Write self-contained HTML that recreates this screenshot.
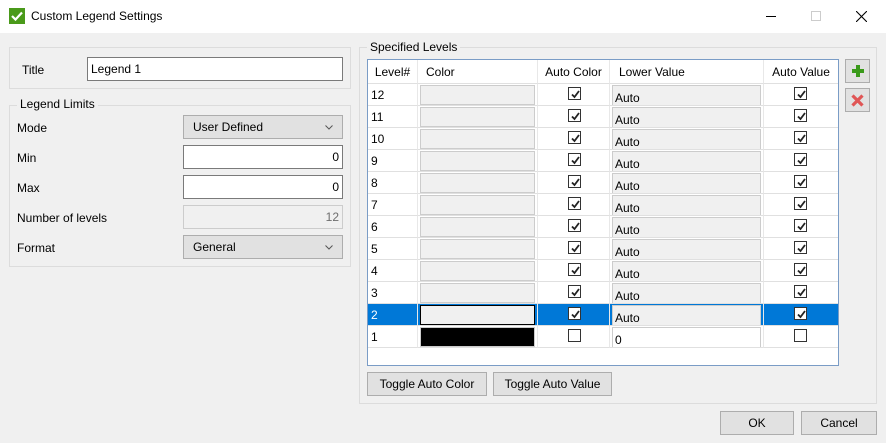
<!DOCTYPE html>
<html><head><style>
*{box-sizing:border-box;margin:0;padding:0}
body{width:886px;height:443px;background:#f0f0f0;font-family:"Liberation Sans",sans-serif;font-size:12px;color:#000;position:relative;overflow:hidden}
.a{position:absolute}
.tb{left:0;top:0;width:886px;height:33px;background:#fff}
.grp{border:1px solid #dcdcdc}
.lbl{background:#f0f0f0;padding:0 3px}
.in{background:#fff;border:1px solid #7a7a7a;height:24px;line-height:22px;padding:0 3px}
.dd{background:#e1e1e1;border:1px solid #adadad;height:24px;line-height:22px;padding-left:9px}
.dd svg{position:absolute;right:9px;top:9px}
.btn{background:#e1e1e1;border:1px solid #adadad;text-align:center;line-height:22px;height:24px}
.grid{left:367px;top:59px;width:472px;height:307px;border:1px solid #7a9cc6;background:#fff}
.hd{top:0;height:24px;line-height:24px;border-right:1px solid #e8e8e8;border-bottom:1px solid #e0e0e0}
.cell{border-right:1px solid #e8e8e8;border-bottom:1px solid #e0e0e0;height:22px}
.cb{width:13px;height:13px;border:1px solid #333;background:#fff}
.cb svg{position:absolute;left:1px;top:1px}
</style></head><body>
<div class="a tb"></div>
<div class="a" style="left:9px;top:8px;width:16px;height:16px;background:#4a9a1a"><svg width="16" height="16"><path d="M3 8 L6.5 11.5 L13 4.5" stroke="#fff" stroke-width="2.2" fill="none"/></svg></div>
<div class="a" style="left:31px;top:9px;font-size:12px">Custom Legend Settings</div>
<div class="a" style="left:766px;top:16px;width:10px;height:1px;background:#000"></div>
<div class="a" style="left:811px;top:11px;width:10px;height:10px;border:1px solid #ccc"></div>
<svg class="a" style="left:856px;top:11px" width="11" height="11"><path d="M0 0L11 11M11 0L0 11" stroke="#000" stroke-width="1.1"/></svg>

<div class="a grp" style="left:9px;top:47px;width:342px;height:42px"></div>
<div class="a" style="left:22px;top:63px">Title</div>
<div class="a in" style="left:87px;top:57px;width:256px">Legend 1</div>

<div class="a grp" style="left:9px;top:105px;width:342px;height:162px"></div>
<div class="a lbl" style="left:17px;top:97px">Legend Limits</div>
<div class="a" style="left:17px;top:121px">Mode</div>
<div class="a dd" style="left:183px;top:115px;width:160px">User Defined<svg width="8" height="5"><path d="M0.5 0.5L4 4L7.5 0.5" stroke="#555" fill="none"/></svg></div>
<div class="a" style="left:17px;top:151px">Min</div>
<div class="a in" style="left:183px;top:145px;width:160px;text-align:right">0</div>
<div class="a" style="left:17px;top:181px">Max</div>
<div class="a in" style="left:183px;top:175px;width:160px;text-align:right">0</div>
<div class="a" style="left:17px;top:211px">Number of levels</div>
<div class="a in" style="left:183px;top:205px;width:160px;text-align:right;background:#f0f0f0;border-color:#ccc;color:#6d6d6d">12</div>
<div class="a" style="left:17px;top:241px">Format</div>
<div class="a dd" style="left:183px;top:235px;width:160px">General<svg width="8" height="5"><path d="M0.5 0.5L4 4L7.5 0.5" stroke="#555" fill="none"/></svg></div>

<div class="a grp" style="left:359px;top:47px;width:518px;height:357px"></div>
<div class="a lbl" style="left:367px;top:40px">Specified Levels</div>

<div class="a grid">
<div class="a hd" style="left:0;width:50px;text-align:center">Level#</div>
<div class="a hd" style="left:50px;width:120px;padding-left:8px">Color</div>
<div class="a hd" style="left:170px;width:72px;text-align:center">Auto Color</div>
<div class="a hd" style="left:242px;width:154px;padding-left:9px">Lower Value</div>
<div class="a hd" style="left:396px;width:74px;text-align:center;border-right:none">Auto Value</div>
<div id="rows"></div>
</div>
<script>
var ck='<svg width="11" height="11"><path d="M2 5.5L4.5 8L9 2" stroke="#222" stroke-width="1.8" fill="none"/></svg>';
var h='';for(var i=0;i<12;i++){var n=12-i,t=24+i*22,sel=n==2,last=n==1;
var bg=sel?'#0078d7':'#fff',fc=sel?'#fff':'#000';
h+='<div class="a cell" style="left:0;top:'+t+'px;width:50px;background:'+bg+';color:'+fc+';padding:4px 0 0 3px">'+n+'</div>';
h+='<div class="a cell" style="left:50px;top:'+t+'px;width:120px;background:'+bg+';padding:1px 2px"><div style="height:20px;border:1px solid '+(sel?'#000':'#ccc')+';background:'+(last?'#000':'#f0f0f0')+'"></div></div>';
h+='<div class="a cell" style="left:170px;top:'+t+'px;width:72px;background:'+bg+'"><div class="a cb" style="left:30px;top:3px">'+(last?'':ck)+'</div></div>';
h+='<div class="a cell" style="left:242px;top:'+t+'px;width:154px;background:'+bg+';padding:1px 2px"><div style="height:20px;border:1px solid #ccc;border-bottom:none;background:'+(last?'#fff':'#f0f0f0')+';padding:5px 0 0 2px;line-height:15px">'+(last?'0':'Auto')+'</div></div>';
h+='<div class="a cell" style="left:396px;top:'+t+'px;width:74px;background:'+bg+';border-right:none"><div class="a cb" style="left:30px;top:3px">'+(last?'':ck)+'</div></div>';}
document.getElementById('rows').innerHTML=h;
</script>
<div class="a btn" style="left:367px;top:372px;width:120px">Toggle Auto Color</div>
<div class="a btn" style="left:493px;top:372px;width:119px">Toggle Auto Value</div>
<div class="a btn" style="left:845px;top:59px;width:25px;height:24px"><svg class="a" style="left:5px;top:4px" width="14" height="14"><path d="M7 1V13M1 7H13" stroke="#3a9a1a" stroke-width="4"/></svg></div>
<div class="a btn" style="left:845px;top:88px;width:25px;height:24px"><svg class="a" style="left:5px;top:5px" width="13" height="13"><path d="M1.5 1.5L11.5 11.5M11.5 1.5L1.5 11.5" stroke="#e05555" stroke-width="3.2"/></svg></div>
<div class="a btn" style="left:720px;top:411px;width:74px">OK</div>
<div class="a btn" style="left:801px;top:411px;width:76px">Cancel</div>
</body></html>
